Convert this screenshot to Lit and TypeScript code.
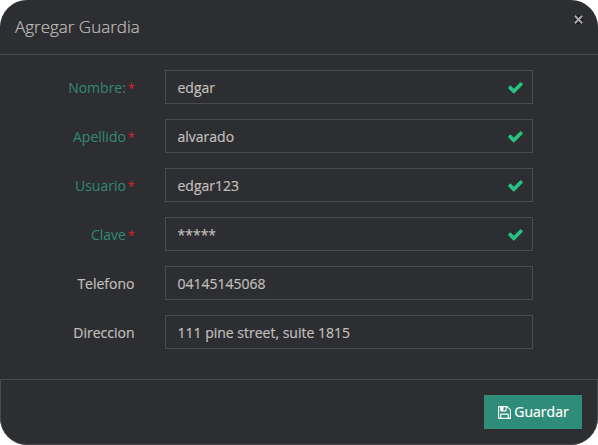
import { LitElement, html, css, svg } from "lit";
import { customElement } from "lit/decorators.js";

interface Field {
  label: string;
  value: string;
  required: boolean;
}

const FIELDS: Field[] = [
  { label: "Nombre:", value: "edgar", required: true },
  { label: "Apellido", value: "alvarado", required: true },
  { label: "Usuario", value: "edgar123", required: true },
  { label: "Clave", value: "*****", required: true },
  { label: "Telefono", value: "04145145068", required: false },
  { label: "Direccion", value: "111 pine street, suite 1815", required: false },
];

const CHECK = svg`<path d="M1671 566q0 40-28 68l-724 724-136 136q-28 28-68 28t-68-28l-136-136-362-362q-28-28-28-68t28-68l136-136q28-28 68-28t68 28l294 295 656-657q28-28 68-28t68 28l136 136q28 28 28 68z"/>`;
const FLOPPY = svg`<path d="M512 1536h768v-384h-768v384zm896 0h128v-896q0-14-10-38.5t-20-34.5l-281-281q-10-10-34-20t-39-10v416q0 40-28 68t-68 28h-576q-40 0-68-28t-28-68v-416h-128v1280h128v-416q0-40 28-68t68-28h832q40 0 68 28t28 68v416zm-384-928v-320q0-13-9.5-22.5t-22.5-9.5h-192q-13 0-22.5 9.5t-9.5 22.5v320q0 13 9.5 22.5t22.5 9.5h192q13 0 22.5-9.5t9.5-22.5zm640 32v928q0 40-28 68t-68 28h-1344q-40 0-68-28t-28-68v-1344q0-40 28-68t68-28h928q40 0 88 20t76 48l280 280q28 28 48 76t20 88z"/>`;

@customElement("app-root")
export class AppRoot extends LitElement {
  static styles = css`
    :host {
      display: block;
      width: 598px;
      height: 445px;
      background: #fff;
      font: 14px/20px "Open Sans", sans-serif;
      color: #c1bfba;
    }
    .modal {
      box-sizing: border-box;
      height: 445px;
      display: flex;
      flex-direction: column;
      border-radius: 27px;
      overflow: hidden;
      background: #2d2e32;
    }
    .header {
      box-sizing: border-box;
      height: 55px;
      display: flex;
      justify-content: space-between;
      padding: 15px 15px 0 15px;
      border-bottom: 1px solid #4b4b4b;
    }
    .title {
      margin: 0;
      font-size: 17px;
      line-height: 24px;
      font-weight: 300;
      -webkit-text-stroke: 0.2px currentColor;
    }
    .close {
      width: 9px;
      height: 9px;
      display: block;
    }
    .body {
      flex: 1;
      display: flex;
      flex-direction: column;
      gap: 15px;
      padding-top: 15px;
    }
    .row {
      display: grid;
      grid-template-columns: 134.5px 368px;
      column-gap: 30.5px;
      height: 34px;
    }
    .label {
      display: flex;
      justify-content: flex-end;
      align-items: center;
      gap: 2px;
      padding-top: 2px;
    }
    .label.required {
      color: #318a75;
    }
    .star {
      color: #e02222;
      font-size: 12px;
      padding-top: 2px;
    }
    .input {
      box-sizing: border-box;
      display: flex;
      align-items: center;
      justify-content: space-between;
      padding: 1px 8px 0 11.5px;
      border: 1px solid #4b4b4b;
    }
    .value {
      -webkit-text-stroke: 0.2px currentColor;
    }
    .check {
      width: 17px;
      height: 17px;
      fill: #26c281;
      display: block;
    }
    .footer {
      box-sizing: border-box;
      height: 66px;
      display: flex;
      justify-content: flex-end;
      align-items: flex-start;
      padding: 15px 15px 0;
      border: 1px solid #4b4b4b;
      border-radius: 0 0 27px 27px;
    }
    .save {
      box-sizing: border-box;
      width: 98px;
      height: 34px;
      display: flex;
      align-items: center;
      justify-content: center;
      gap: 2px;
      padding: 0;
      border: 0;
      background: #2f8c78;
      color: #fff;
      font: inherit;
      -webkit-text-stroke: 0.2px currentColor;
    }
    .floppy {
      width: 15px;
      height: 15px;
      fill: #fff;
    }
  `;

  render() {
    return html`
      <div class="modal">
        <div class="header">
          <h4 class="title">Agregar Guardia</h4>
          <svg class="close" viewBox="0 0 9 9">
            <rect width="9" height="9" fill="#1d1d1f" />
            <path d="M.8.8L8.2 8.2M8.2.8L.8 8.2" stroke="#a8a8a8" stroke-width="2" />
          </svg>
        </div>
        <div class="body">
          ${FIELDS.map(
            (f) => html`
              <div class="row">
                <div class="label ${f.required ? "required" : "value"}">
                  <span>${f.label}</span>${f.required ? html`<span class="star">*</span>` : ""}
                </div>
                <div class="input">
                  <span class="value">${f.value}</span>
                  ${f.required ? html`<svg class="check" viewBox="0 0 1792 1792">${CHECK}</svg>` : ""}
                </div>
              </div>
            `
          )}
        </div>
        <div class="footer">
          <button class="save">
            <svg class="floppy" viewBox="0 0 1792 1792">${FLOPPY}</svg><span>Guardar</span>
          </button>
        </div>
      </div>
    `;
  }
}
